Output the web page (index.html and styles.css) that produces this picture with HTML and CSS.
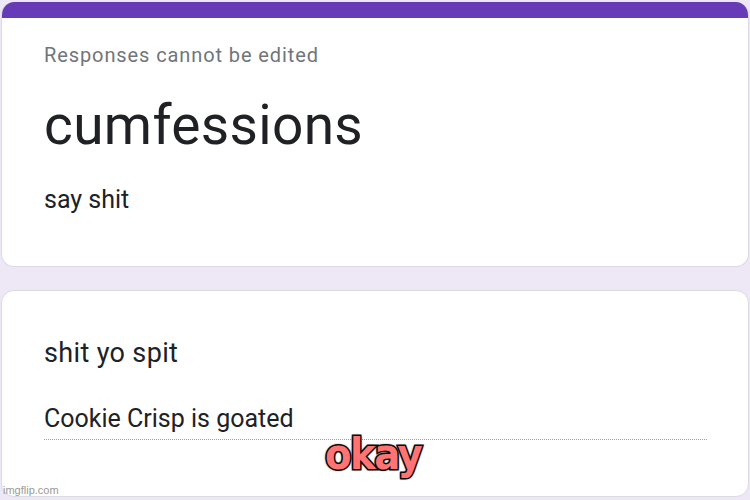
FILE: index.html
```html
<!DOCTYPE html>
<html>
<head>
<meta charset="utf-8">
<link rel="stylesheet" href="styles.css">
</head>
<body>
<div class="page">
  <div class="card header-card">
    <div class="accent"></div>
    <div class="header-body">
      <div class="notice">Responses cannot be edited</div>
      <div class="title">cumfessions</div>
      <div class="desc">say shit</div>
    </div>
  </div>
  <div class="card question-card">
    <div class="question">shit yo spit</div>
    <div class="answer">Cookie Crisp is goated</div>
  </div>
</div>
<div class="caption">okay</div>
<div class="watermark">imgflip.com</div>
</body>
</html>
```
FILE: styles.css
```css
html, body {
  margin: 0;
  padding: 0;
  width: 750px;
  height: 500px;
  overflow: hidden;
  background: #ede7f6;
  font-family: Roboto, "Liberation Sans", sans-serif;
  color: #202124;
}
.page {
  display: flex;
  flex-direction: column;
  gap: 23px;
  padding: 2px 1px 0 1px;
}
.card {
  background: #fff;
  border: 1px solid #dadce0;
  border-radius: 13px;
  overflow: hidden;
}
.header-card {
  height: 264px;
  border-top: none;
}
.accent {
  height: 16px;
  background: #673ab7;
}
.header-body {
  padding: 25px 42px 0 42px;
}
.notice {
  font-size: 20px;
  line-height: 24px;
  color: #70757a;
  letter-spacing: 0.9px;
}
.title {
  margin-top: 26px;
  font-size: 55px;
  line-height: 64px;
  letter-spacing: 0.35px;
}
.desc {
  margin-top: 28px;
  font-size: 25px;
  line-height: 30px;
}
.question-card {
  padding: 46px 41px 0 42px;
  box-sizing: border-box;
  height: 207px;
}
.question {
  font-size: 27px;
  line-height: 32px;
  letter-spacing: 0.35px;
}
.answer {
  margin-top: 35px;
  font-size: 25px;
  line-height: 30px;
  padding-bottom: 5px;
  border-bottom: 1px dotted #9aa0a6;
}
.caption {
  position: absolute;
  left: 325px;
  top: 431px;
  font-family: "DejaVu Sans Condensed", "DejaVu Sans", sans-serif;
  font-weight: bold;
  font-size: 43px;
  line-height: 46px;
  color: #ff7373;
  -webkit-text-stroke: 3px #111;
  paint-order: stroke fill;
  text-shadow: 0 0 3px #000, 0 0 2px #000;
  letter-spacing: -1.5px;
}
.watermark {
  position: absolute;
  left: 3px;
  top: 484px;
  font-family: "Liberation Sans", Arial, sans-serif;
  font-size: 11px;
  line-height: 13px;
  color: #9a9a9a;
}
```
